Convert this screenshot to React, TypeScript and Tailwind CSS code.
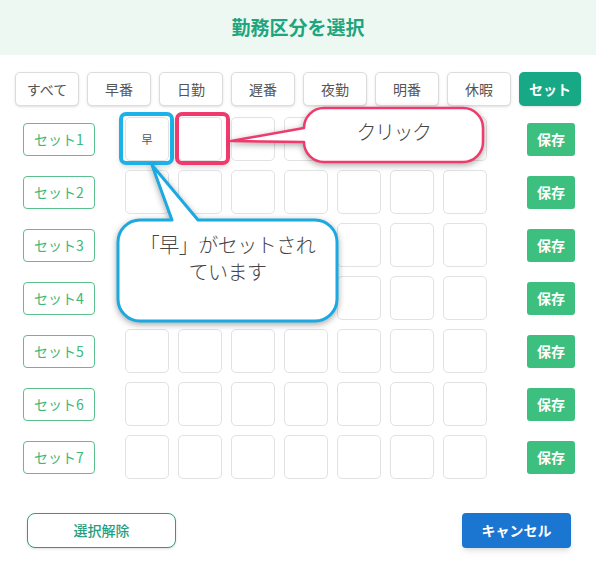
const FILTERS = ["すべて", "早番", "日勤", "遅番", "夜勤", "明番", "休暇"];
const ROWS = [1, 2, 3, 4, 5, 6, 7];
const COLS = [0, 1, 2, 3, 4, 5, 6];

const font = "font-['Noto_Sans_CJK_JP','Noto_Sans',sans-serif]";

const Cell = ({ row, col }: { row: number; col: number }) => {
  const first = row === 1 && col === 0;
  const second = row === 1 && col === 1;
  return (
    <div className="relative w-[44px] h-[44px] rounded-[5px] border border-[#e2e2e2] bg-white flex items-center justify-center">
      {first && <span className="text-[11px] text-[#555]">早</span>}
      {first && (
        <div className="absolute -top-[6px] -left-[7px] w-[55px] h-[53px] rounded-[7px] border-[4px] border-[#1ab2e8] shadow-md" />
      )}
      {second && (
        <div className="absolute -top-[6px] -left-[4px] w-[55px] h-[53px] rounded-[7px] border-[4px] border-[#f03a6c] shadow-md" />
      )}
    </div>
  );
};

const Callouts = () => (
  <>
    <svg
      className="absolute inset-0 pointer-events-none drop-shadow-[0_2px_3px_rgba(0,0,0,0.35)]"
      width="596"
      height="567"
      viewBox="0 0 596 567"
    >
      <path
        d="M 324 108 H 463 A 20 20 0 0 1 483 128 V 142 A 20 20 0 0 1 463 162 H 324 A 20 20 0 0 1 304 142 L 231 141 L 304 128 A 20 20 0 0 1 324 108 Z"
        fill="#ffffff"
        stroke="#f03a6c"
        strokeWidth="2.5"
        strokeLinejoin="round"
      />
      <path
        d="M 140 220 H 172 L 152 165 L 198 220 H 315 A 22 22 0 0 1 337 242 V 299 A 22 22 0 0 1 315 321 H 140 A 22 22 0 0 1 118 299 V 242 A 22 22 0 0 1 140 220 Z"
        fill="#ffffff"
        stroke="#1aa9e2"
        strokeWidth="3"
        strokeLinejoin="round"
      />
    </svg>
    <div className="absolute left-[304px] top-[107px] w-[179px] h-[50px] flex items-center justify-center text-[20px] font-light tracking-[-1.5px] text-[#444]">
      クリック
    </div>
    <div className="absolute left-[118px] top-[231px] w-[219px] flex flex-col items-center text-[20px] font-light leading-[27px] tracking-[-0.5px] text-[#444]">
      <span>「早」がセットされ</span>
      <span>ています</span>
    </div>
  </>
);

export default function App() {
  return (
    <div className={`relative w-[596px] h-[567px] bg-white overflow-hidden ${font}`}>
      <header className="h-[55px] bg-[#edf8f2] flex items-center justify-center">
        <h1 className="text-[19px] font-bold text-[#1fa57e]">勤務区分を選択</h1>
      </header>

      <div className="mt-[17px] px-[15px] flex gap-2">
        {FILTERS.map((f) => (
          <button
            key={f}
            className="flex-1 h-[34px] rounded-[5px] border border-[#dcdcdc] bg-white shadow-sm text-[14px] text-[#555]"
          >
            {f}
          </button>
        ))}
        <button className="flex-1 h-[34px] rounded-[5px] bg-[#17a985] shadow-sm text-[14px] font-bold text-white">
          セット
        </button>
      </div>

      <div className="mt-[11px] flex flex-col gap-[9px]">
        {ROWS.map((r) => (
          <div key={r} className="flex items-center h-[44px] pl-[23px] pr-[21px]">
            <div className="w-[72px] h-[33px] rounded-[4px] border border-[#5cbf8e] flex items-center justify-center text-[14px] text-[#3cb878]">
              セット{r}
            </div>
            <div className="ml-[30px] flex gap-[9px]">
              {COLS.map((c) => (
                <Cell key={c} row={r} col={c} />
              ))}
            </div>
            <button className="ml-auto w-[48px] h-[33px] rounded-[3px] bg-[#3dbf7f] text-[14px] font-bold text-white">
              保存
            </button>
          </div>
        ))}
      </div>

      <div className="mt-[34px] pl-[27px] pr-[25px] flex justify-between">
        <button className="w-[149px] h-[35px] rounded-lg border border-[#26a085] bg-white text-[14px] font-medium text-[#1f9e80] shadow-sm">
          選択解除
        </button>
        <button className="w-[109px] h-[35px] rounded-[4px] bg-[#1b76d2] text-[14px] font-bold text-white shadow-md">
          キャンセル
        </button>
      </div>

      <Callouts />
    </div>
  );
}
